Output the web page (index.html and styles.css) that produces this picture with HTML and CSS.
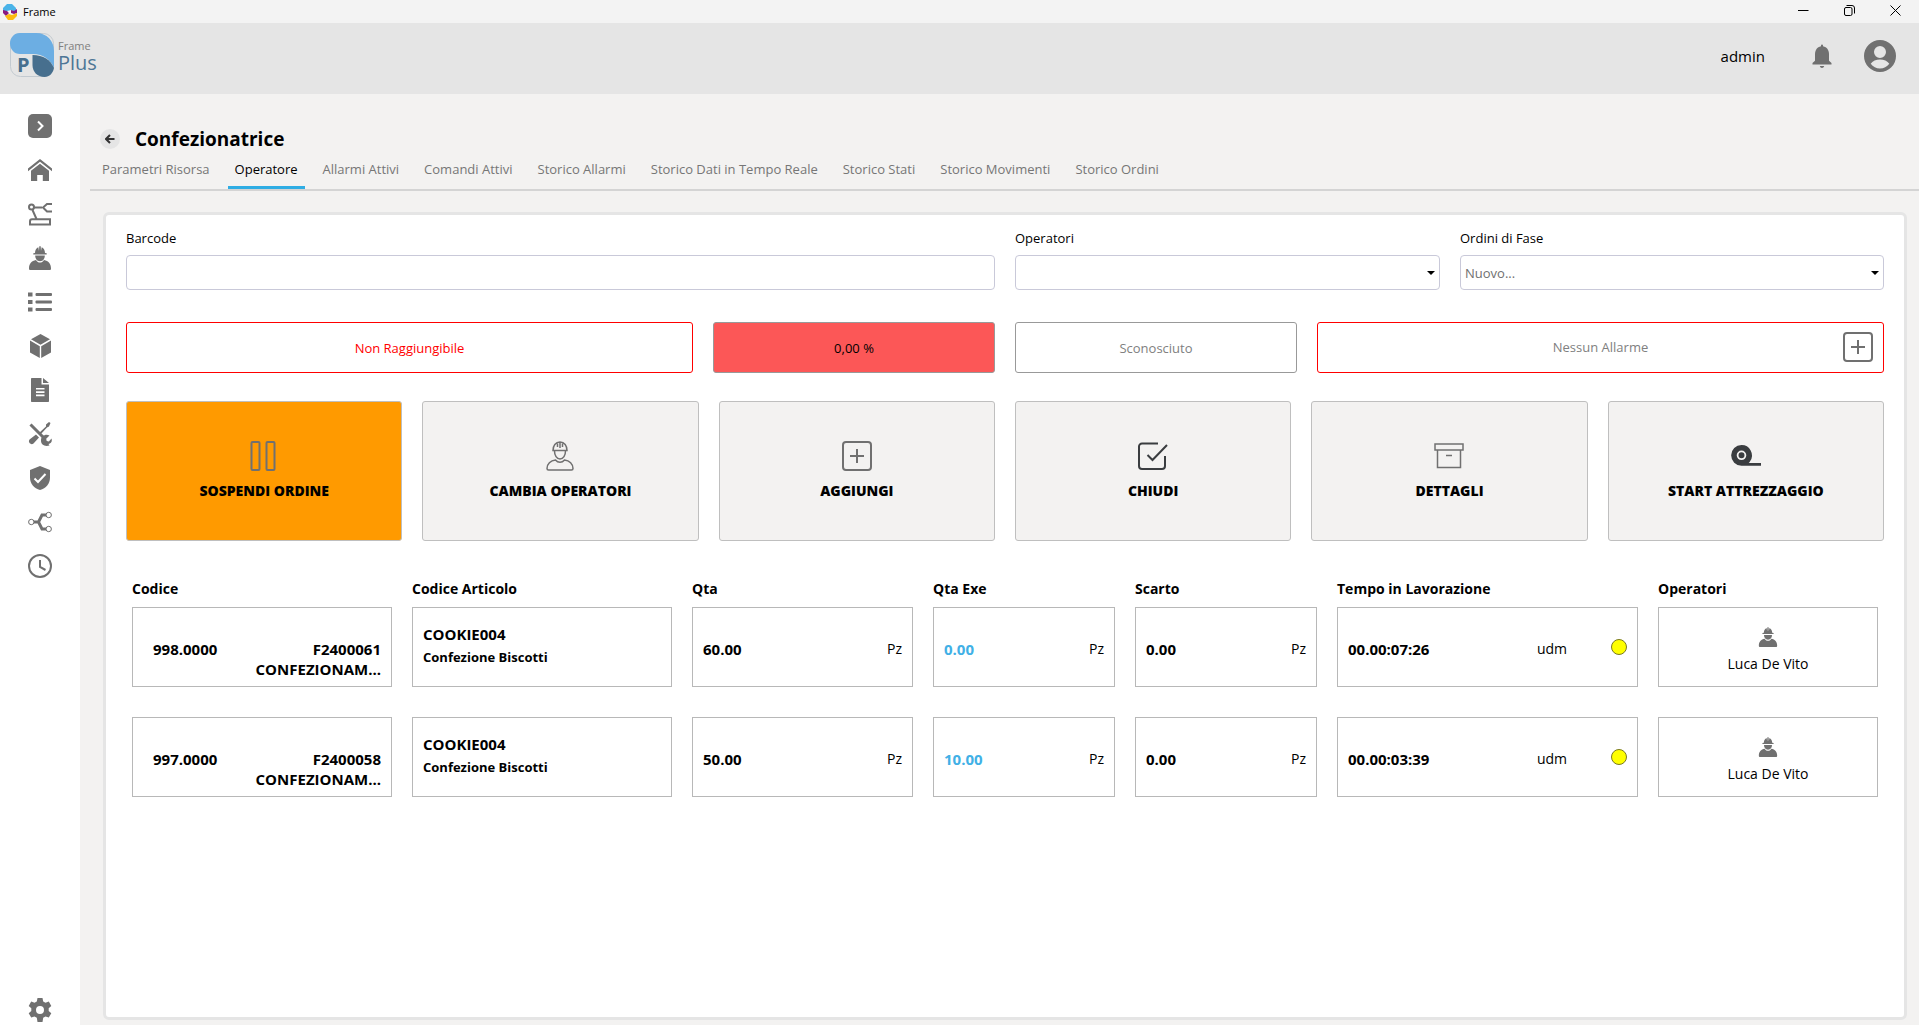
FILE: index.html
```
<!DOCTYPE html>
<html lang="it">

<head>
    <meta charset="utf-8">
    <title>Frame</title>
    <meta name="viewport" content="width=device-width, initial-scale=1">
    <link rel="stylesheet" href="styles.css">
</head>

<body>

    <!-- shared icons -->
    <svg class="icon-defs" width="0" height="0">
        <symbol id="icon-worker" viewBox="0 0 24 24">
            <path d="M7 7c0-3 1.500-5 3.300-5.700L11 5l.3-4.700h1.400L13 5l.7-3.700C15.500 2 17 4 17 7l1.700.3v1.200H5.300V7.300z" />
            <path d="M7.200 9.500h9.600c0 3-1.600 5.700-4.800 5.700s-4.800-2.700-4.800-5.700z" />
            <path d="M1 22.500c0-5 2.500-7.500 7-8.500 1.200 2 2.500 2.500 4 2.500s2.800-.5 4-2.500c4.500 1 7 3.500 7 8.500 0 1-.5 1.500-1.500 1.500h-19C1.500 24 1 23.500 1 22.500z" />
        </symbol>
        <symbol id="icon-add" viewBox="0 0 30 30">
            <rect x="1" y="1" width="28" height="28" rx="3" />
            <path d="M15 8v14M8 15h14" />
        </symbol>
    </svg>

    <div class="titlebar">
        <svg class="app-icon" width="16" height="16" viewBox="0 0 16 16">
            <path d="M5 0h5l4 4v3h-3L9 6 5 7H1V4z" fill="#4ab3e8" />
            <path d="M1 6l4 1 2 2-3 3-3-3zM9 6l3 1 3-2v4l-3 1-3-1z" fill="#8a1a80" />
            <path d="M7 10l3 1 5-2v3l-4 4H6l-3-4z" fill="#fdbb11" />
            <path d="M7 7l2 1-1 1-2-1z" fill="#fff" />
        </svg>
        <span class="app-name">Frame</span>
        <button type="button" class="window-button" aria-label="Riduci">
            <svg width="11" height="11" viewBox="0 0 11 11"><path d="M0 5.500h10.500" /></svg>
        </button>
        <button type="button" class="window-button" aria-label="Ripristina">
            <svg width="11" height="11" viewBox="0 0 11 11"><rect x=".5" y="2.500" width="7.500" height="8" rx="1.500" /><path d="M2.500.5H8A2.500 2.500 0 0 1 10.500 3v5.500" /></svg>
        </button>
        <button type="button" class="window-button" aria-label="Chiudi finestra">
            <svg width="11" height="11" viewBox="0 0 11 11"><path d="M.5.5l10 10M10.500.5l-10 10" /></svg>
        </button>
    </div>

    <header class="header">
        <svg class="logo" width="92" height="46" viewBox="0 0 92 46">
            <rect x=".5" y=".5" width="43" height="43" rx="10" fill="none" stroke="#c3cad0" />
            <path d="M10 0h16c11 0 18 8 18 18v17c-3-8-11-14-21-14H10C4 21 0 16 0 10.500S4 0 10 0z" fill="#6caee3" />
            <path d="M22.500 22c11 0 18 5 21.500 13-1 5-4.500 9-9.500 9-7 0-12-5-12-12z" fill="#476f8e" />
            <text class="logo-p" x="7" y="39">P</text>
            <text class="logo-frame" x="48" y="17">Frame</text>
            <text class="logo-plus" x="48" y="37">Plus</text>
        </svg>
        <span class="user-name">admin</span>
        <button type="button" class="icon-button" aria-label="Notifiche">
            <svg width="24" height="24" viewBox="0 0 24 24">
                <path d="M11 1.500a1 1 0 0 1 2 0v.7c4 .8 6 4 6 8v6.500l2.500 2.300v1.500h-19V19L5 16.700v-6.500c0-4 2-7.200 6-8zM9.800 22h4.400c-.3 1.300-1.200 2-2.200 2s-1.900-.7-2.200-2z" />
            </svg>
        </button>
        <button type="button" class="icon-button" aria-label="Profilo">
            <svg width="32" height="32" viewBox="0 0 32 32">
                <path fill-rule="evenodd" d="M16 0a16 16 0 1 0 0 32 16 16 0 0 0 0-32zm0 6a6 6 0 1 1 0 12 6 6 0 0 1 0-12zm0 13.500c3.800 0 7.500 1.500 9.300 4.200C23 26.700 19.700 28.500 16 28.500s-7-1.800-9.300-4.800c1.800-2.700 5.500-4.200 9.300-4.200z" />
            </svg>
        </button>
    </header>

    <div class="page">

        <nav class="sidebar">
            <a href="#" aria-label="Espandi menu">
                <svg width="24" height="24" viewBox="0 0 24 24"><rect width="24" height="24" rx="5" /><path class="light" d="M10 7.500l4.500 4.500-4.500 4.500" /></svg>
            </a>
            <a href="#" aria-label="Home">
                <svg width="24" height="24" viewBox="0 0 24 24"><path d="M12 1L0 10.500v2.700L12 3.800l12 9.400v-2.700z" /><path d="M12 5.800L3 12.800V23h6.200v-6h5.600v6H21V12.800z" /></svg>
            </a>
            <a href="#" aria-label="Risorse">
                <svg width="24" height="24" viewBox="0 0 24 24"><path class="line" d="M6 5.500h8M24 2h-5l-4 3.500L19 9.500h5M4.500 8l4 9M2 22.500v-3c0-1.500.7-2.300 2-2.300h18v5.300z" /><circle class="line" cx="3.500" cy="5" r="2.500" /></svg>
            </a>
            <a href="#" aria-label="Operatori">
                <svg width="24" height="24"><use href="#icon-worker" /></svg>
            </a>
            <a href="#" aria-label="Ordini">
                <svg width="24" height="24" viewBox="0 0 24 24"><path d="M0 2.500h4.500v4H0zM0 10h4.500v4H0zM0 17.500h4.500v4H0z" /><rect x="7.500" y="3" width="16.500" height="3" rx="1" /><rect x="7.500" y="10.500" width="16.500" height="3" rx="1" /><rect x="7.500" y="18" width="16.500" height="3" rx="1" /></svg>
            </a>
            <a href="#" aria-label="Articoli">
                <svg width="24" height="24" viewBox="0 0 24 24"><path d="M12.500 0l9.500 5.200-9.500 5.600L3 5.200zM2 6.500l9.800 5.700V24L2 18.500zM23 6.500V18.500L13.200 24V12.200z" /></svg>
            </a>
            <a href="#" aria-label="Documenti">
                <svg width="24" height="24" viewBox="0 0 24 24"><path fill-rule="evenodd" d="M3 1c0-.6.400-1 1-1h9.500v6.500H21V23c0 .6-.4 1-1 1H4c-.6 0-1-.4-1-1zM8 10v1.600h8.500V10zm0 3.300v1.600h8.500v-1.600zm0 3.300v1.600h8.500v-1.600z" /><path d="M15 0l6 5H15z" /></svg>
            </a>
            <a href="#" aria-label="Manutenzione">
                <svg width="24" height="24" viewBox="0 0 24 24"><path d="M18 2.500L21 0l1.500 1-1.500 3.500-2 1-6.500 7-1.500-1.500L18 4.500zM8 12.500l3 3-5.500 6c-2.500 2-6-1-4-4z" /><path class="line-thick" d="M2.500 2.500L15 15" /><path d="M21.500 13.500l-3.300 3.300.5 2.200 2.200.4 2.600-3c1 3-.5 5.300-3 5.500l1 1.600c-5 1.500-8.800-1-8.500-5.500.3-4 4.500-6.500 8.500-4.500z" /></svg>
            </a>
            <a href="#" aria-label="Qualità">
                <svg width="24" height="24" viewBox="0 0 24 24"><path d="M12 0l10 4v7.500C22 17.500 18 22.500 12 24 6 22.500 2 17.500 2 11.500V4z" /><path class="light" d="M6.500 12.500l3.500 3.500 7.500-8" /></svg>
            </a>
            <a href="#" aria-label="Flussi">
                <svg width="24" height="24" viewBox="0 0 24 24"><path class="line-thick" d="M6 12h5M18 5h-4l-3.500 7 3.500 7h4" /><circle class="node" cx="3.300" cy="12" r="2.700" /><circle class="node" cx="20.700" cy="5" r="2.700" /><circle class="node" cx="20.700" cy="19" r="2.700" /></svg>
            </a>
            <a href="#" aria-label="Storico">
                <svg width="24" height="24" viewBox="0 0 24 24"><circle class="line" cx="12" cy="12" r="11" /><path class="line" d="M12 6v7l5.500 3" /></svg>
            </a>
            <a href="#" class="sidebar-settings" aria-label="Impostazioni">
                <svg width="24" height="24" viewBox="0 0 24 24"><path fill-rule="evenodd" d="M9.500 0h5l.7 3.400 2.300 1.300 3.300-1.100 2.500 4.300-2.600 2.300v2.700l2.600 2.300-2.500 4.300-3.300-1.100-2.300 1.300-.7 4.300h-5l-.7-4.300-2.300-1.300-3.300 1.100-2.500-4.300 2.600-2.300v-2.700L.700 7.900l2.500-4.300 3.300 1.100 2.300-1.300zM12 8a4 4 0 1 0 0 8 4 4 0 0 0 0-8z" /></svg>
            </a>
        </nav>

        <main class="content">

            <div class="page-title">
                <button type="button" class="back-button" aria-label="Indietro">
                    <svg width="10" height="10" viewBox="0 0 10 10"><path d="M9.500 5H1M5 1L1 5l4 4" /></svg>
                </button>
                <h1>Confezionatrice</h1>
            </div>

            <nav class="tabs">
                <a href="#">Parametri Risorsa</a>
                <a href="#" class="active">Operatore</a>
                <a href="#">Allarmi Attivi</a>
                <a href="#">Comandi Attivi</a>
                <a href="#">Storico Allarmi</a>
                <a href="#">Storico Dati in Tempo Reale</a>
                <a href="#">Storico Stati</a>
                <a href="#">Storico Movimenti</a>
                <a href="#">Storico Ordini</a>
            </nav>

            <section class="panel">

                <form class="filters">
                    <div class="field">
                        <label for="barcode">Barcode</label>
                        <input type="text" id="barcode" name="barcode">
                    </div>
                    <div class="field">
                        <label for="operatori">Operatori</label>
                        <div class="select-box">
                            <select id="operatori" name="operatori">
                                <option value=""></option>
                            </select>
                        </div>
                    </div>
                    <div class="field">
                        <label for="ordini">Ordini di Fase</label>
                        <div class="select-box">
                            <select id="ordini" name="ordini">
                                <option value="">Nuovo...</option>
                            </select>
                        </div>
                    </div>
                </form>

                <div class="status-row">
                    <div class="status status-error">Non Raggiungibile</div>
                    <div class="status status-percent">0,00 %</div>
                    <div class="status">Sconosciuto</div>
                    <div class="status status-alarm">
                        <span>Nessun Allarme</span>
                        <button type="button" aria-label="Aggiungi allarme">
                            <svg class="outline" width="30" height="30"><use href="#icon-add" /></svg>
                        </button>
                    </div>
                </div>

                <div class="actions">
                    <button type="button" class="action action-suspend">
                        <svg class="outline" width="30" height="30" viewBox="0 0 30 30"><rect x="2.500" y="1" width="8" height="28" rx="1" /><rect x="17.500" y="1" width="8" height="28" rx="1" /></svg>
                        Sospendi Ordine
                    </button>
                    <button type="button" class="action">
                        <svg class="outline thin" width="30" height="30" viewBox="0 0 30 30"><path d="M8 9.500C8 5 10.500 1 15 1s7 4 7 8.500zM7.500 9.500h15M12.500 2.500V6M15 1v6M17.500 2.500V6M9.500 10c0 4.500 2.200 8 5.500 8s5.500-3.500 5.500-8M10.500 19c-5 .5-8.500 4-8.500 8.500 0 1 .5 1.500 1.500 1.500h23c1 0 1.500-.5 1.500-1.500 0-4.500-3.500-8-8.500-8.500-2.500 3-6.500 3-9 0z" /></svg>
                        Cambia Operatori
                    </button>
                    <button type="button" class="action">
                        <svg class="outline" width="30" height="30"><use href="#icon-add" /></svg>
                        Aggiungi
                    </button>
                    <button type="button" class="action">
                        <svg class="outline dark" width="30" height="30" viewBox="0 0 30 30"><path d="M20 2.500H4a3 3 0 0 0-3 3V25a3 3 0 0 0 3 3h20a3 3 0 0 0 3-3V15M9.500 14l5 5L29 4" /></svg>
                        Chiudi
                    </button>
                    <button type="button" class="action">
                        <svg class="outline thin" width="30" height="30" viewBox="0 0 30 30"><path d="M1 3h28v6H1zM3.500 9v17.500h23V9M12 14.500h6" /></svg>
                        Dettagli
                    </button>
                    <button type="button" class="action">
                        <svg width="30" height="30" viewBox="0 0 30 30"><path class="tape" fill-rule="evenodd" d="M10.500 4a10.300 10.300 0 0 1 8.700 16c-.5.900-1 1.500-1.500 2H30v2.700H10.500a10.300 10.300 0 0 1 0-20.700zm0 5.500a4.800 4.800 0 1 0 0 9.600 4.800 4.800 0 0 0 0-9.600zm0 1.800a3 3 0 1 1 0 6 3 3 0 0 1 0-6z" /></svg>
                        Start Attrezzaggio
                    </button>
                </div>

                <table class="orders">
                    <colgroup>
                        <col class="col-code">
                        <col class="col-item">
                        <col class="col-qty">
                        <col class="col-done">
                        <col class="col-done">
                        <col class="col-time">
                        <col class="col-operator">
                    </colgroup>
                    <thead>
                        <tr>
                            <th>Codice</th>
                            <th>Codice Articolo</th>
                            <th>Qta</th>
                            <th>Qta Exe</th>
                            <th>Scarto</th>
                            <th>Tempo in Lavorazione</th>
                            <th>Operatori</th>
                        </tr>
                    </thead>
                    <tbody>
                        <tr>
                            <td><div class="box box-code"><b>998.0000</b><b class="phase">F2400061<br>CONFEZIONAM...</b></div></td>
                            <td><div class="box box-item"><b>COOKIE004</b><b class="description">Confezione Biscotti</b></div></td>
                            <td><div class="box"><b>60.00</b><span>Pz</span></div></td>
                            <td><div class="box"><b class="done">0.00</b><span>Pz</span></div></td>
                            <td><div class="box"><b>0.00</b><span>Pz</span></div></td>
                            <td><div class="box box-time"><b>00.00:07:26</b><span>udm</span><i class="dot"></i></div></td>
                            <td><div class="box box-operator"><svg width="20" height="20"><use href="#icon-worker" /></svg><span>Luca De Vito</span></div></td>
                        </tr>
                        <tr>
                            <td><div class="box box-code"><b>997.0000</b><b class="phase">F2400058<br>CONFEZIONAM...</b></div></td>
                            <td><div class="box box-item"><b>COOKIE004</b><b class="description">Confezione Biscotti</b></div></td>
                            <td><div class="box"><b>50.00</b><span>Pz</span></div></td>
                            <td><div class="box"><b class="done">10.00</b><span>Pz</span></div></td>
                            <td><div class="box"><b>0.00</b><span>Pz</span></div></td>
                            <td><div class="box box-time"><b>00.00:03:39</b><span>udm</span><i class="dot"></i></div></td>
                            <td><div class="box box-operator"><svg width="20" height="20"><use href="#icon-worker" /></svg><span>Luca De Vito</span></div></td>
                        </tr>
                    </tbody>
                </table>

            </section>
        </main>
    </div>

</body>

</html>
```
FILE: styles.css
```
* {
    box-sizing: border-box;
}

body {
    margin: 0;
    min-height: 100vh;
    display: flex;
    flex-direction: column;
    background-color: #f3f2f1;
    color: #000;
    font-family: "Segoe UI", "Open Sans", "Noto Sans", sans-serif;
    font-size: 13px;
    line-height: 20px;
}

svg {
    display: block;
    fill: #707070;
}

button {
    padding: 0;
    border: none;
    background: none;
    color: inherit;
    font-family: inherit;
    cursor: pointer;
}

.icon-defs {
    position: absolute;
}

/* window title bar */
.titlebar {
    display: flex;
    align-items: center;
    height: 23px;
    padding: 0 1px 0 2px;
    background-color: #f3f3f3;
}

.app-name {
    flex: 1;
    margin-left: 5px;
    font-size: 11px;
}

.window-button {
    display: flex;
    justify-content: center;
    width: 46px;
    padding-bottom: 3px;
}

.window-button svg {
    fill: none;
    stroke: #000;
}

/* header */
.header {
    display: flex;
    align-items: center;
    height: 71px;
    padding: 0 23px 6px 10px;
    background-color: #e5e5e5;
}

.logo-p {
    fill: #476f8e;
    font-size: 20px;
    font-weight: bold;
}

.logo-frame {
    fill: #808080;
    font-size: 11px;
}

.logo-plus {
    fill: #4d7696;
    font-size: 20px;
}

.user-name {
    margin-left: auto;
    margin-right: 45px;
    font-size: 15px;
}

.icon-button + .icon-button {
    margin-left: 30px;
}

/* layout */
.page {
    display: flex;
    flex: 1;
}

.sidebar {
    display: flex;
    flex-direction: column;
    align-items: center;
    gap: 20px;
    width: 80px;
    padding: 20px 0 3px;
    background-color: #fff;
}

.sidebar-settings {
    margin-top: auto;
}

.sidebar .light {
    fill: none;
    stroke: #fff;
    stroke-width: 2;
}

.sidebar .line {
    fill: none;
    stroke: #707070;
    stroke-width: 2;
}

.sidebar .line-thick {
    fill: none;
    stroke: #707070;
    stroke-width: 3;
}

.sidebar .node {
    fill: #fff;
    stroke: #707070;
    stroke-width: 1;
}

.content {
    display: flex;
    flex: 1;
    flex-direction: column;
    min-width: 0;
    padding: 32px 0 5px 10px;
}

.page-title {
    display: flex;
    align-items: center;
    gap: 15px;
    padding-left: 10px;
}

.page-title h1 {
    margin: 0;
    font-size: 19px;
    line-height: 26px;
}

.back-button {
    display: flex;
    align-items: center;
    justify-content: center;
    width: 20px;
    height: 20px;
    border-radius: 50%;
    background-color: #e5e5e5;
}

.back-button svg {
    fill: none;
    stroke: #333;
    stroke-width: 2;
}

.tabs {
    display: flex;
    gap: 11px;
    padding: 7px 5px 0;
    border-bottom: 2px solid #d4d4d4;
}

.tabs a {
    padding: 0 7px 7px;
    border-bottom: 3px solid transparent;
    color: #767676;
    text-decoration: none;
}

.tabs a.active {
    border-bottom-color: #2fade4;
    color: #000;
}

/* main panel */
.panel {
    flex: 1;
    margin: 21px 12px 0 13px;
    padding: 13px 20px;
    border: 3px solid #e5e5e5;
    border-radius: 6px;
    background-color: #fff;
}

.filters {
    display: grid;
    grid-template-columns: 869fr 425fr 424fr;
    gap: 20px;
}

.field label {
    display: block;
    margin-bottom: 7px;
}

.field input,
.field select {
    display: block;
    width: 100%;
    height: 35px;
    padding: 0 4px;
    border: 1px solid #c9c9d9;
    border-radius: 4px;
    background-color: #fff;
    color: #707070;
    font-family: inherit;
    font-size: 13px;
    appearance: none;
}

.select-box {
    position: relative;
}

.select-box::after {
    content: "";
    position: absolute;
    right: 5px;
    top: 16px;
    border: 4px solid transparent;
    border-top-color: #000;
    border-bottom: none;
    pointer-events: none;
}

.status-row {
    display: grid;
    grid-template-columns: 567fr 282fr 282fr 567fr;
    gap: 20px;
    margin-top: 32px;
}

.status {
    display: flex;
    align-items: center;
    justify-content: center;
    height: 51px;
    border: 1px solid #999;
    border-radius: 3px;
    color: #808080;
}

.status-error {
    border-color: #f00;
    color: #f00;
}

.status-percent {
    background-color: #fc5757;
    color: #000;
}

.status-alarm {
    padding: 0 10px 2px 40px;
    border-color: #f00;
}

.status-alarm span {
    flex: 1;
    text-align: center;
}

.actions {
    display: grid;
    grid-template-columns: repeat(6, 1fr);
    gap: 20px;
    margin-top: 28px;
}

.action {
    display: flex;
    flex-direction: column;
    align-items: center;
    justify-content: center;
    gap: 10px;
    height: 140px;
    border: 1px solid #bfbfbf;
    border-radius: 3px;
    background-color: #f3f2f1;
    font-size: 14px;
    font-weight: 800;
    line-height: 20px;
    text-transform: uppercase;
}

.action-suspend {
    background-color: #ff9a00;
}

.outline {
    fill: none;
    stroke: #707070;
    stroke-width: 2;
}

.outline.thin {
    stroke-width: 1.5;
}

.outline.dark {
    stroke: #3a3d40;
}

.tape {
    fill: #3a3d40;
}

/* orders table */
.orders {
    table-layout: fixed;
    width: calc(100% + 8px);
    margin: 38px -4px 0;
    border-collapse: collapse;
    font-size: 14px;
}

.col-code {
    width: 280px;
}

.col-item {
    width: 280px;
}

.col-qty {
    width: 241px;
}

.col-done {
    width: 202px;
}

.col-time {
    width: 321px;
}

.col-operator {
    width: 240px;
}

.orders th {
    padding: 0 10px 8px;
    text-align: left;
}

.orders td {
    padding: 0 10px 30px;
}

.box {
    display: flex;
    justify-content: space-between;
    height: 80px;
    padding: 31px 10px 0;
    border: 1px solid #b8b8b8;
}

.box b {
    font-size: 15px;
}

.box-code {
    padding-left: 20px;
}

.phase {
    text-align: right;
}

.box-item {
    flex-direction: column;
    justify-content: flex-start;
    gap: 3px;
    padding-top: 16px;
}

.box .description {
    font-size: 13px;
}

.done {
    color: #41b0e6;
}

.box-time {
    gap: 44px;
}

.box-time b {
    flex: 1;
}

.dot {
    width: 16px;
    height: 16px;
    border: 1px solid #7a7a20;
    border-radius: 50%;
    background-color: #ff0;
}

.box-operator {
    flex-direction: column;
    align-items: center;
    justify-content: flex-start;
    gap: 7px;
    padding-top: 19px;
}
```
